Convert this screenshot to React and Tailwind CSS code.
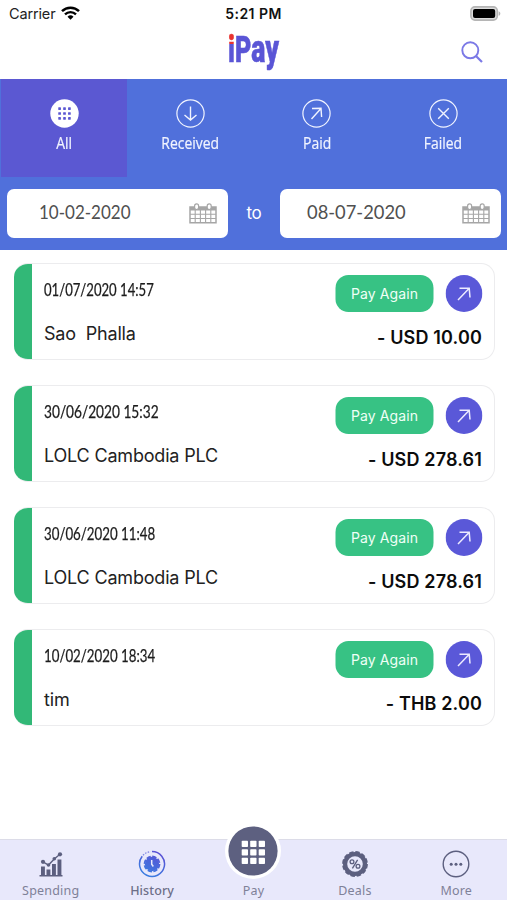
import React from "react";

const TRANSACTIONS = [
  { date: "01/07/2020 14:57", dateScale: "scale-x-[0.795]", name: "Sao  Phalla", amount: "- USD 10.00" },
  { date: "30/06/2020 15:32", dateScale: "scale-x-[0.83]", name: "LOLC Cambodia PLC", amount: "- USD 278.61" },
  { date: "30/06/2020 11:48", dateScale: "scale-x-[0.805]", name: "LOLC Cambodia PLC", amount: "- USD 278.61" },
  { date: "10/02/2020 18:34", dateScale: "scale-x-[0.805]", name: "tim", amount: "- THB 2.00" },
];

function WifiIcon() {
  return (
    <svg className="ml-[6px] h-[14px] w-[19px] -translate-y-[1px]" viewBox="0 0 19 14" fill="none" stroke="#000">
      <path d="M1 5.2a12.2 12.2 0 0 1 17 0" strokeWidth="2.5" />
      <path d="M4 8.3a8 8 0 0 1 11 0" strokeWidth="2.4" />
      <path d="M9.5 13.8 6.5 10.7a4.3 4.3 0 0 1 6 0Z" fill="#000" stroke="none" />
    </svg>
  );
}

function BatteryIcon() {
  return (
    <svg className="h-[15px] w-[31px]" viewBox="0 0 31 15">
      <rect x="0.9" y="0.9" width="26.4" height="13.2" rx="4" fill="#ddd" stroke="#b5b5b5" strokeWidth="1.6" />
      <rect x="3" y="3" width="22.2" height="9" rx="2" fill="#000" />
      <path d="M28.6 5.2c2.3.8 2.3 3.8 0 4.6Z" fill="#b5b5b5" />
    </svg>
  );
}

function StatusBar() {
  return (
    <div className="flex h-[27px] items-center justify-between pr-[6px] pl-[9px] text-[14.5px] text-[#222]">
      <div className="flex w-[180px] items-center">
        <span className="tracking-[-0.15px]">Carrier</span>
        <WifiIcon />
      </div>
      <span className="-translate-x-[1.5px] text-[14px] font-semibold tracking-[0.45px] text-[#111]">5:21 PM</span>
      <div className="flex w-[180px] justify-end">
        <BatteryIcon />
      </div>
    </div>
  );
}

function Header() {
  return (
    <header className="grid h-[52px] grid-cols-[1fr_auto_1fr] items-center">
      <span />
      <div className="h-[44px] w-[52px] -translate-y-[4px]">
        <div className="flex origin-left scale-x-[0.68] items-baseline font-['Roboto'] text-[37px] leading-[44px] font-black [-webkit-text-stroke-width:0.6px]">
          <span className="bg-linear-to-b from-[#e8322f] from-[36%] to-[#5a55d6] to-[36%] bg-clip-text text-transparent">i</span>
          <span className="text-[#5a55d6]">P</span>
          <span className="text-[39px] text-[#5a55d6]">ay</span>
        </div>
      </div>
      <svg className="mr-[24px] h-[22px] w-[22px] -translate-y-[1px] justify-self-end" viewBox="0 0 22 22" fill="none" stroke="#7b79e6" strokeWidth="1.9">
        <circle cx="9.3" cy="9.3" r="8" />
        <path d="m15 15 6 6" strokeWidth="2.2" />
      </svg>
    </header>
  );
}

function ArrowUpRight() {
  return <path d="M9.5 20 19 9.5M10 9.5 19 9.3 19.6 18" />;
}

function TabIcon({ kind }) {
  if (kind === "all") {
    return (
      <svg className="h-[29px] w-[29px]" viewBox="0 0 29 29">
        <circle cx="14.5" cy="14.5" r="14.2" fill="#fff" />
        {[9.6, 14.5, 19.4].map((y) =>
          [9.6, 14.5, 19.4].map((x) => (
            <rect key={`${x}-${y}`} x={x - 1.35} y={y - 1.35} width="2.7" height="2.7" rx="0.4" fill="#5b57d2" />
          ))
        )}
      </svg>
    );
  }
  return (
    <svg className="h-[29px] w-[29px]" viewBox="0 0 29 29" fill="none" stroke="#f1f4ff" strokeWidth="1.4">
      <circle cx="14.5" cy="14.5" r="13.6" strokeWidth="1.2" />
      {kind === "received" && <path d="M14.5 7.5V21M8.5 16l6 5 6-5" />}
      {kind === "paid" && <ArrowUpRight />}
      {kind === "failed" && <path d="m9.2 9.2 10.6 10.6M19.8 9.2 9.2 19.8" />}
    </svg>
  );
}

function Tab({ kind, label, active }) {
  return (
    <div className={`flex h-full flex-col items-center pt-[20px] ${active ? "bg-[#5b58d2]" : ""}`}>
      <TabIcon kind={kind} />
      <span className="mt-[4px] scale-x-[0.87] font-['Open_Sans'] text-[16px] leading-[22px] text-[#f1f4ff] [-webkit-text-stroke-width:0.2px]">{label}</span>
    </div>
  );
}

function CalendarIcon() {
  return (
    <svg className="h-[21px] w-[28px]" viewBox="0 0 28 21" fill="none" stroke="#a6a6a6">
      <path d="M1 4h26v15.8H1Z" strokeWidth="1.5" />
      <path d="M1 4h26v3.5H1Z" fill="#a6a6a6" stroke="none" />
      <path d="M1 11.3h26M1 15.5h26M6.2 7v12.8M11.4 7v12.8M16.6 7v12.8M21.8 7v12.8" strokeWidth="1.1" />
      <rect x="5.6" y="0.9" width="4" height="5.6" rx="2" fill="#fff" strokeWidth="1.2" />
      <rect x="18.2" y="0.9" width="4" height="5.6" rx="2" fill="#fff" strokeWidth="1.2" />
    </svg>
  );
}

function DateField({ value, pad, scale }) {
  return (
    <div className={`flex h-[49px] w-[221px] items-center justify-between rounded-[7px] bg-white pr-[11px] ${pad}`}>
      <span className={`origin-left -translate-y-[1px] font-['Lato'] text-[19px] text-[#505050] ${scale}`}>{value}</span>
      <CalendarIcon />
    </div>
  );
}

function Filters() {
  return (
    <section className="h-[171px] bg-[#5070db]">
      <div className="grid h-[98px] grid-cols-4 pr-[0.5px] pl-[1px]">
        <Tab kind="all" label="All" active />
        <Tab kind="received" label="Received" />
        <Tab kind="paid" label="Paid" />
        <Tab kind="failed" label="Failed" />
      </div>
      <div className="mt-[12px] flex items-center justify-between pr-[6px] pl-[7px]">
        <DateField value="10-02-2020" pad="pl-[32px]" scale="scale-x-[0.895]" />
        <span className="font-['Inter'] text-[17px] tracking-[-0.3px] text-white">to</span>
        <DateField value="08-07-2020" pad="pl-[27px]" scale="scale-x-[0.965]" />
      </div>
    </section>
  );
}

function TransactionCard({ date, dateScale, name, amount }) {
  return (
    <article className="flex h-[97px] overflow-hidden rounded-[14px] border border-l-0 border-[#ececee] bg-white">
      <div className="w-[18px] shrink-0 bg-[#32b877]" />
      <div className="flex flex-1 justify-between pr-[12px] pl-[12px]">
        <div className="flex flex-col pt-[15px]">
          <span className={`origin-left self-start font-['Lato'] text-[16.5px] leading-[22px] whitespace-nowrap text-[#1c1c1c] [-webkit-text-stroke-width:0.25px] ${dateScale}`}>{date}</span>
          <span className="mt-[21px] text-[18px] leading-[24px] tracking-[-0.18px] whitespace-pre text-[#222]">{name}</span>
        </div>
        <div className="flex flex-col items-end pt-[11px]">
          <div className="flex translate-x-[0.5px] items-center gap-[12px]">
            <button className="h-[37px] w-[98px] rounded-[13px] bg-[#37c284] text-[14px] tracking-[0.1px] text-[#effff6]">Pay Again</button>
            <svg className="h-[37px] w-[37px]" viewBox="0 0 37 37" fill="none" stroke="#eceaff" strokeWidth="1.5">
              <circle cx="18.5" cy="18.5" r="18.4" fill="#5a58d8" stroke="none" />
              <path d="M12.5 25 23.5 13.5M14 13.3 23.7 13.3 24.5 22.5" />
            </svg>
          </div>
          <span className="mt-[14px] text-[18px] leading-[24px] font-semibold tracking-[0.15px] text-[#0c0c0c]">{amount}</span>
        </div>
      </div>
    </article>
  );
}

function SpendingIcon() {
  return (
    <svg className="h-[28px] w-[28px]" viewBox="0 0 28 28" fill="#5c5f7f">
      <path d="M4 25.5V16.5h3.9V25.5ZM9.5 25.5v-6h3.9V25.5ZM15 25.5V14h3.9V25.5ZM20.5 25.5V9.5h3.9V25.5ZM2.5 25h23v1.4h-23Z" />
      <path d="m6 11.8 5.5 3.2 6-6.3L23 4.3" fill="none" stroke="#5c5f7f" strokeWidth="1.4" />
      <circle cx="6" cy="11.8" r="2.1" />
      <circle cx="11.5" cy="15" r="1.8" />
      <circle cx="17.3" cy="8.8" r="1.8" />
      <circle cx="23" cy="4.3" r="2.1" />
    </svg>
  );
}

function HistoryIcon() {
  return (
    <svg className="h-[28px] w-[28px]" viewBox="0 0 28 28" fill="none">
      <defs>
        <linearGradient id="history" gradientUnits="userSpaceOnUse" x1="8" y1="26" x2="20" y2="2">
          <stop offset="0.1" stopColor="#3b7be0" />
          <stop offset="1" stopColor="#5a4fd4" />
        </linearGradient>
      </defs>
      <path d="M14 1.5A12.5 12.5 0 1 1 4.2 6.3" stroke="url(#history)" strokeWidth="1.5" />
      <path d="M5 5.3A12.5 12.5 0 0 1 12.5 1.6" stroke="url(#history)" strokeWidth="1.3" strokeDasharray="1.5 1.3" opacity="0.7" />
      <circle cx="14" cy="14" r="7.2" fill="url(#history)" />
      <circle cx="14" cy="14" r="7.5" stroke="url(#history)" strokeWidth="1.8" strokeDasharray="4.4 1.49" />
      <path d="M13.7 10v4.2l1.6 2.3" stroke="#e8e8fb" strokeWidth="1.5" />
    </svg>
  );
}

function PayIcon() {
  return (
    <svg className="h-[58px] w-[58px]" viewBox="0 0 58 58">
      <circle cx="29" cy="29" r="28" fill="#fff" />
      <circle cx="29" cy="29" r="24.6" fill="#5d6080" />
      {[17.7, 26.2, 34.7].map((y) =>
        [17.7, 26.2, 34.7].map((x) => (
          <rect key={`${x}-${y}`} x={x} y={y + 1} width="6.3" height="6.3" rx="0.8" fill="#fff" />
        ))
      )}
    </svg>
  );
}

function DealsIcon() {
  return (
    <svg className="h-[28px] w-[28px]" viewBox="0 0 28 28" fill="none" stroke="#5c5f7f">
      <circle cx="14" cy="14" r="9.9" strokeWidth="4.2" />
      <circle cx="14" cy="14" r="12" strokeWidth="1.8" strokeDasharray="4.4 1.883" />
      <circle cx="11" cy="11.8" r="1.9" strokeWidth="1.3" />
      <circle cx="17" cy="16.2" r="1.9" strokeWidth="1.3" />
      <path d="m16.6 9.8-5.2 8.6" strokeWidth="1.3" />
    </svg>
  );
}

function MoreIcon() {
  return (
    <svg className="h-[28px] w-[28px]" viewBox="0 0 28 28" fill="#5c5f7f">
      <circle cx="14" cy="14" r="12.8" fill="none" stroke="#5c5f7f" strokeWidth="1.4" />
      <circle cx="9.2" cy="14.2" r="1.5" />
      <circle cx="14" cy="14.2" r="1.5" />
      <circle cx="18.8" cy="14.2" r="1.5" />
    </svg>
  );
}

function NavItem({ icon, label, active }) {
  return (
    <div className="flex flex-col items-center">
      {icon}
      <span className={`mt-[4px] mb-[1px] font-['Noto_Sans'] text-[12.5px] leading-[17px] ${active ? "tracking-[0.1px] font-medium text-[#6d6f88]" : "tracking-[0.2px] text-[#7f8198]"}`}>{label}</span>
    </div>
  );
}

function BottomNav() {
  return (
    <nav className="mt-auto grid h-[61px] grid-cols-5 grid-rows-[60px] items-end border-t border-[#dcdce8] bg-[#e8e8fb]">
      <NavItem icon={<SpendingIcon />} label="Spending" />
      <NavItem icon={<HistoryIcon />} label="History" active />
      <NavItem icon={<div className="-mb-[2px]"><PayIcon /></div>} label="Pay" />
      <NavItem icon={<DealsIcon />} label="Deals" />
      <NavItem icon={<MoreIcon />} label="More" />
    </nav>
  );
}

export default function App() {
  return (
    <div className="flex h-[900px] w-[507px] flex-col overflow-hidden bg-white font-['Inter',sans-serif]">
      <StatusBar />
      <Header />
      <Filters />
      <main className="flex flex-col gap-[25px] pt-[13px] pr-[12px] pl-[14px]">
        {TRANSACTIONS.map((t) => (
          <TransactionCard key={t.date} {...t} />
        ))}
      </main>
      <BottomNav />
    </div>
  );
}
